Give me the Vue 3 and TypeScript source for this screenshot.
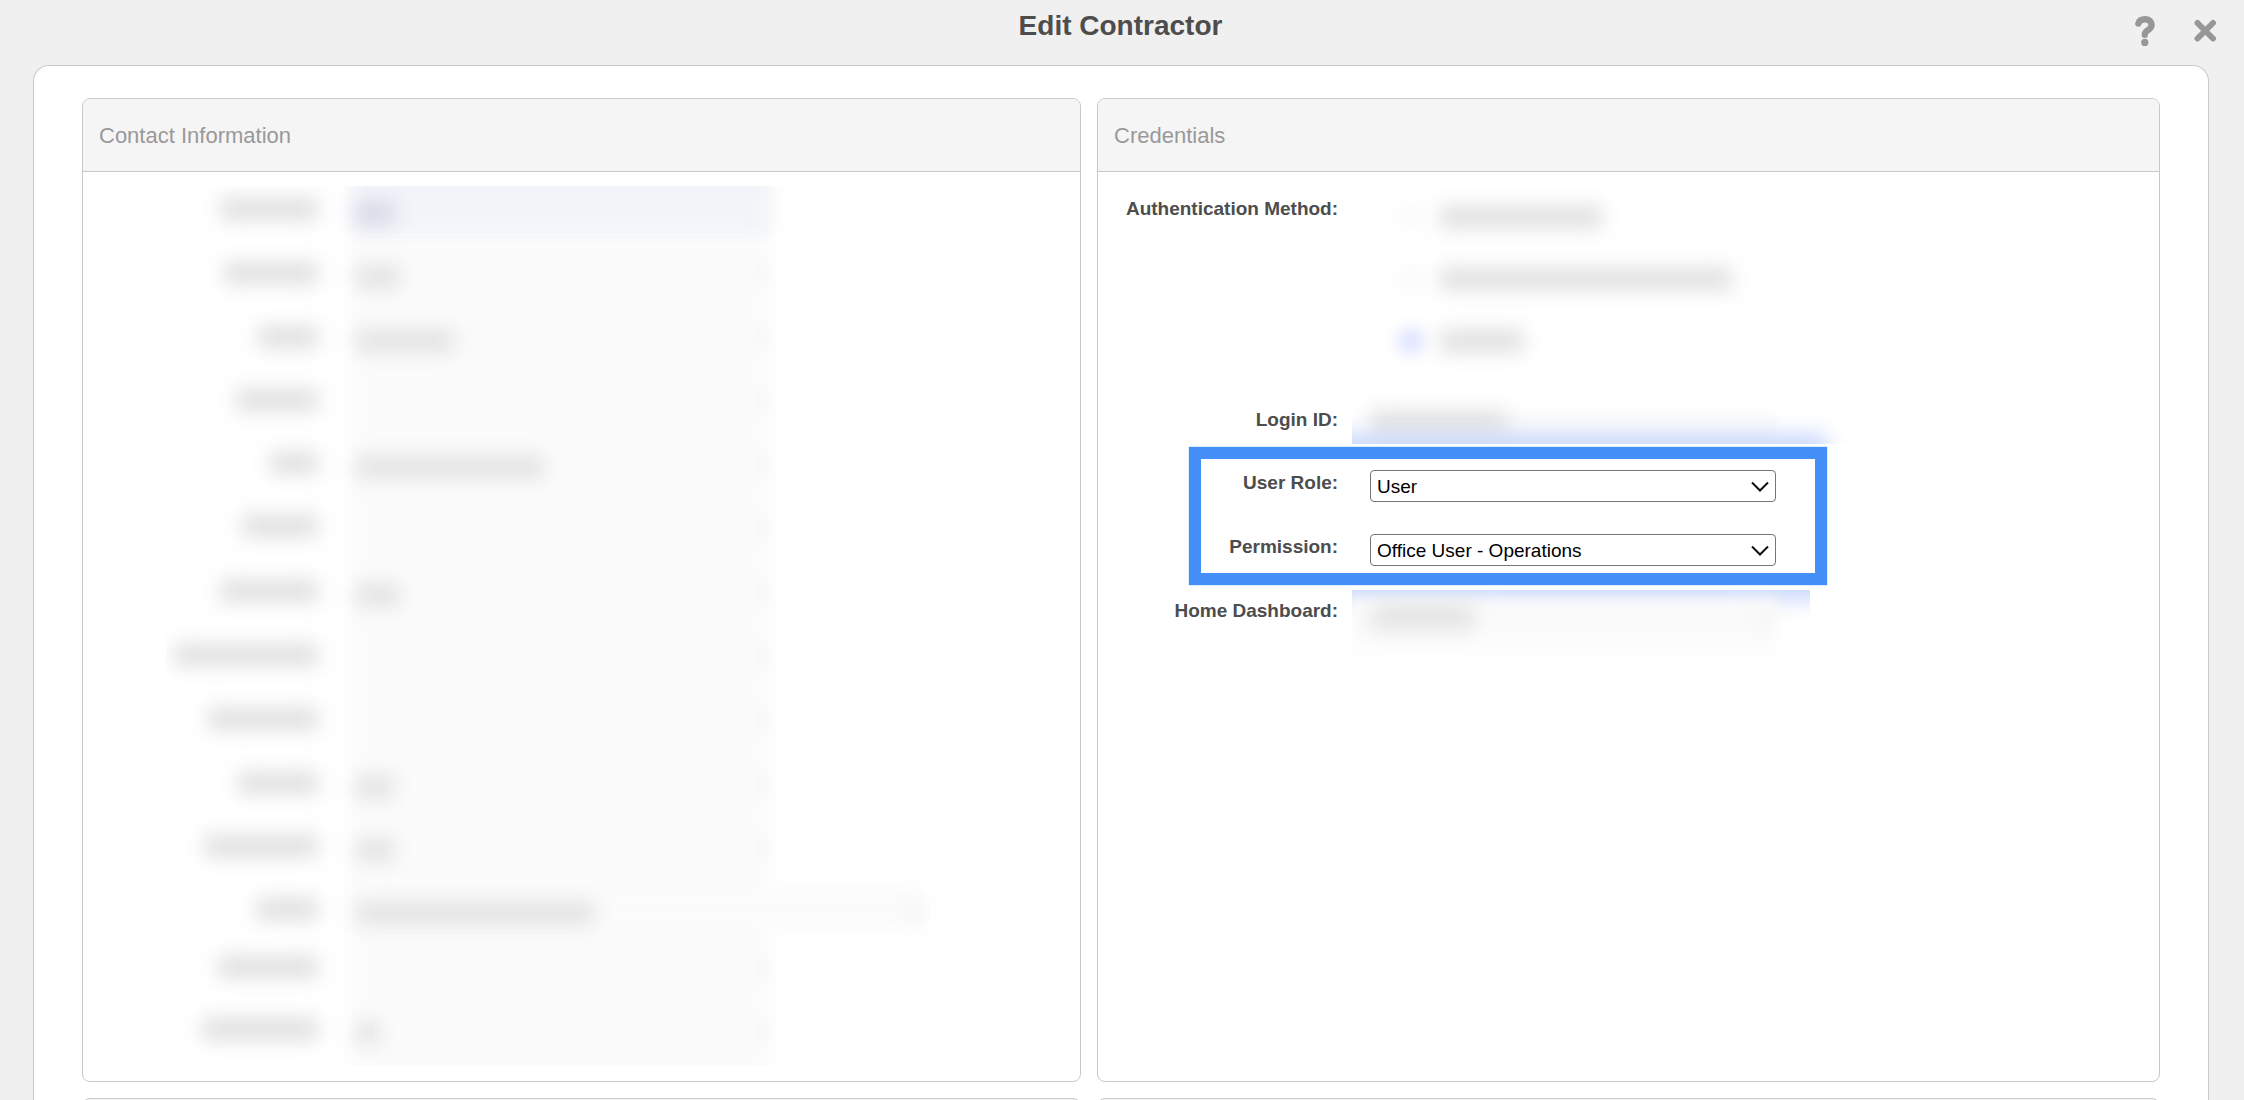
<script setup lang="ts">
import { ref } from 'vue'

interface ObscuredRow {
  height: number
  label: number
  value: number
  wide?: boolean
}

const contactRows: ObscuredRow[] = [
  { height: 64, label: 98, value: 38 },
  { height: 64, label: 94, value: 44 },
  { height: 63, label: 60, value: 98 },
  { height: 63, label: 82, value: 0 },
  { height: 63, label: 48, value: 188 },
  { height: 65, label: 76, value: 0 },
  { height: 64, label: 98, value: 44 },
  { height: 64, label: 144, value: 0 },
  { height: 64, label: 110, value: 0 },
  { height: 63, label: 80, value: 38 },
  { height: 63, label: 114, value: 38 },
  { height: 58, label: 62, value: 238, wide: true },
  { height: 62, label: 100, value: 0 },
  { height: 60, label: 116, value: 24 },
]

const authOptions = [
  { width: 162, on: false },
  { width: 292, on: false },
  { width: 84, on: true },
]

const userRole = ref('User')
const permission = ref('Office User - Operations')
const roles = ['User']
const permissions = ['Office User - Operations']
</script>

<template>
  <main class="dialog">
    <header class="titlebar">
      <h1>Edit Contractor</h1>
      <div class="actions">
        <button type="button" aria-label="Help">
          <svg width="24" height="34" viewBox="0 0 24 34" fill="none">
            <path
              d="M5.400 9.400C6.400 6.400 9 5.200 12 5.200c3.800 0 6.600 2.300 6.600 5.800 0 4.800-6.800 5.200-6.800 9.200v.6"
              stroke="#979797" stroke-width="6.400" stroke-linecap="round" stroke-linejoin="round"
            />
            <circle cx="11.800" cy="28.400" r="3.600" fill="#979797" />
          </svg>
        </button>
        <button type="button" aria-label="Close">
          <svg width="24" height="34" viewBox="0 0 24 34" fill="none">
            <path d="M4.500 9l15.500 15.500M20 9L4.500 24.500" stroke="#979797" stroke-width="6" stroke-linecap="round" />
          </svg>
        </button>
      </div>
    </header>

    <div class="panel">
      <div class="cards">
        <section class="card contact">
          <h2>Contact Information</h2>
          <div class="hidden-details" aria-hidden="true">
            <div class="field-band"></div>
            <div
              v-for="(row, i) in contactRows"
              :key="i"
              class="hidden-row"
              :class="{ first: i === 0 }"
              :style="{ height: row.height + 'px' }"
            >
              <div class="hidden-label"><i class="smudge" :style="{ width: row.label + 'px' }"></i></div>
              <div class="hidden-field" :class="{ wide: row.wide }">
                <i v-if="row.value" class="smudge" :style="{ width: row.value + 'px' }"></i>
                <i class="edge"></i>
              </div>
            </div>
          </div>
        </section>

        <section class="card credentials">
          <h2>Credentials</h2>
          <form class="form" @submit.prevent>
            <div class="grid upper">
              <span class="label">Authentication Method:</span>
              <span class="label">Login ID:</span>
              <div class="obscured" aria-hidden="true">
                <div v-for="(option, i) in authOptions" :key="i" class="option">
                  <i class="dot" :class="{ on: option.on }"></i>
                  <i class="smudge" :style="{ width: option.width + 'px' }"></i>
                </div>
                <div class="login-field"><i class="smudge"></i></div>
                <div class="glow"></div>
              </div>
            </div>

            <div class="highlighted">
              <div class="grid">
                <label class="label" for="user-role">User Role:</label>
                <div class="select">
                  <select id="user-role" v-model="userRole">
                    <option v-for="role in roles" :key="role">{{ role }}</option>
                  </select>
                  <svg width="20" height="12" viewBox="0 0 20 12" fill="none">
                    <path d="M2 1.500l8 8 8-8" stroke="#111" stroke-width="2" />
                  </svg>
                </div>
              </div>
              <div class="grid">
                <label class="label" for="permission">Permission:</label>
                <div class="select">
                  <select id="permission" v-model="permission">
                    <option v-for="item in permissions" :key="item">{{ item }}</option>
                  </select>
                  <svg width="20" height="12" viewBox="0 0 20 12" fill="none">
                    <path d="M2 1.500l8 8 8-8" stroke="#111" stroke-width="2" />
                  </svg>
                </div>
              </div>
            </div>

            <div class="grid">
              <span class="label">Home Dashboard:</span>
              <div class="obscured dashboard" aria-hidden="true">
                <div class="glow top"></div>
                <div class="dashboard-field"><i class="smudge"></i><i class="smudge arrow"></i></div>
              </div>
            </div>
          </form>
        </section>
      </div>

      <div class="cards following">
        <section class="card contact"></section>
        <section class="card credentials"></section>
      </div>
    </div>
  </main>
</template>

<style>
body {
  margin: 0;
}
</style>

<style scoped>
*,
*::before,
*::after {
  box-sizing: border-box;
}

.dialog {
  display: flex;
  flex-direction: column;
  height: 100vh;
  overflow: hidden;
  background: #f0f0f0;
  color: #4d4d4d;
  font-family: "Liberation Sans", Arial, sans-serif;
}

.titlebar {
  display: grid;
  grid-template-columns: 1fr auto 1fr;
  flex: none;
  height: 65px;
  padding: 10px 27px 0 24px;
}

h1 {
  grid-column: 2;
  margin: 0;
  font-size: 28px;
  line-height: 32px;
}

.actions {
  display: flex;
  justify-content: flex-end;
  gap: 36px;
}

.actions button {
  display: block;
  height: 38px;
  margin: 0;
  padding: 3px 0 0;
  border: 0;
  background: none;
  cursor: pointer;
}

.actions svg {
  display: block;
}

.panel {
  flex: 1;
  min-height: 0;
  margin: 0 35px 0 33px;
  padding: 32px 48px 0;
  overflow: hidden;
  border: 1px solid #c8c8c8;
  border-bottom: 0;
  border-radius: 16px 16px 0 0;
  background: #fff;
}

.cards {
  display: flex;
  gap: 16px;
}

.following {
  height: 80px;
  margin-top: 16px;
}

.following .card {
  background: #f5f5f5;
}

.card {
  min-width: 0;
  overflow: hidden;
  border: 1px solid #c8c8c8;
  border-radius: 8px;
  background: #fff;
}

.contact {
  flex: 999 1 0;
}

.credentials {
  flex: 1063 1 0;
}

h2 {
  margin: 0;
  padding: 21px 16px 19px;
  border-bottom: 1px solid #c8c8c8;
  background: #f5f5f5;
  color: #999;
  font-size: 22px;
  font-weight: 400;
  line-height: 32px;
}

.smudge {
  display: block;
  flex: none;
  height: 22px;
  background: #dfdfdf;
  filter: blur(10px);
}

.hidden-details {
  position: relative;
  margin: 14px 57px 15px 83px;
  overflow: hidden;
}

.field-band {
  position: absolute;
  top: -20px;
  bottom: -20px;
  left: 186px;
  width: 416px;
  background: #fbfbfb;
  filter: blur(10px);
}

.hidden-row {
  display: flex;
  position: relative;
  gap: 38px;
}

.hidden-label {
  display: flex;
  flex: none;
  justify-content: flex-end;
  width: 152px;
  padding-top: 12px;
}

.hidden-field {
  display: flex;
  position: relative;
  justify-content: space-between;
  width: 414px;
  height: 44px;
  padding-top: 16px;
}

.hidden-field .smudge {
  background: #e1e1e1;
}

.hidden-field .edge {
  width: 14px;
  height: 18px;
  margin-left: auto;
  background: #f6f6f6;
  filter: blur(8px);
}

.hidden-field.wide {
  width: 569px;
}

.hidden-field.wide::before {
  content: "";
  position: absolute;
  inset: 0;
  background: #fbfbfb;
  filter: blur(8px);
}

.hidden-field.wide .smudge {
  position: relative;
}

.first .hidden-field::before {
  content: "";
  position: absolute;
  top: -20px;
  right: 0;
  bottom: -4px;
  left: -4px;
  background: #f2f4fa;
  filter: blur(8px);
}

.first .hidden-field .smudge {
  position: relative;
  background: #d4d6e3;
}

.form {
  padding: 14px 0;
}

.grid {
  display: grid;
  grid-template-columns: 240px minmax(0, 1fr);
  column-gap: 14px;
  min-height: 64px;
}

.upper {
  grid-template-rows: 211px 47px;
}

.label {
  grid-column: 1;
  padding-top: 11px;
  font-size: 19px;
  font-weight: 700;
  line-height: 24px;
  text-align: right;
}

.obscured {
  position: relative;
  grid-row: 1 / span 2;
  grid-column: 2;
  width: 495px;
  overflow: hidden;
}

.option {
  display: flex;
  align-items: center;
  gap: 16px;
  height: 62px;
  padding-left: 46px;
}

.dot {
  width: 26px;
  height: 26px;
  border-radius: 50%;
  background: #fafafa;
  filter: blur(8px);
}

.dot.on {
  background: #dbe1ff;
}

.login-field {
  height: 64px;
  margin: 30px 71px 0 18px;
  padding-top: 10px;
  background: linear-gradient(#fff, #fafafa 20px);
  filter: blur(4px);
}

.login-field .smudge {
  width: 136px;
  height: 24px;
}

.glow {
  position: absolute;
  right: 20px;
  bottom: -16px;
  left: -20px;
  height: 26px;
  background: #c9d7fa;
  filter: blur(10px);
}

.highlighted {
  position: relative;
  margin-top: 16px;
}

.highlighted::after {
  content: "";
  position: absolute;
  top: -13px;
  bottom: 3px;
  left: 91px;
  width: 638px;
  border: 12px solid #448ef7;
  box-shadow: 0 0 1px #448ef7;
  pointer-events: none;
}

.select {
  position: relative;
  width: 406px;
  height: 32px;
  margin: 10px 0 0 18px;
}

select {
  width: 100%;
  height: 32px;
  margin: 0;
  padding: 0 32px 0 6px;
  appearance: none;
  border: 1px solid #767676;
  border-radius: 4px;
  background: #fff;
  color: #000;
  font-family: inherit;
  font-size: 19px;
}

.select svg {
  position: absolute;
  top: 11px;
  right: 6px;
  pointer-events: none;
}

.dashboard {
  width: 458px;
  height: 80px;
  margin-top: 2px;
}

.dashboard-field {
  display: flex;
  position: relative;
  justify-content: space-between;
  width: 424px;
  padding: 16px 0 42px 20px;
  background: linear-gradient(#fafafa00, #fafafa 20px, #fcfcfc 50px, #fff 72px);
  filter: blur(4px);
}

.dashboard-field .smudge {
  width: 102px;
}

.dashboard-field .smudge.arrow {
  width: 20px;
  background: #f4f4f4;
}

.glow.top {
  top: -16px;
  right: -20px;
  bottom: auto;
}
</style>
